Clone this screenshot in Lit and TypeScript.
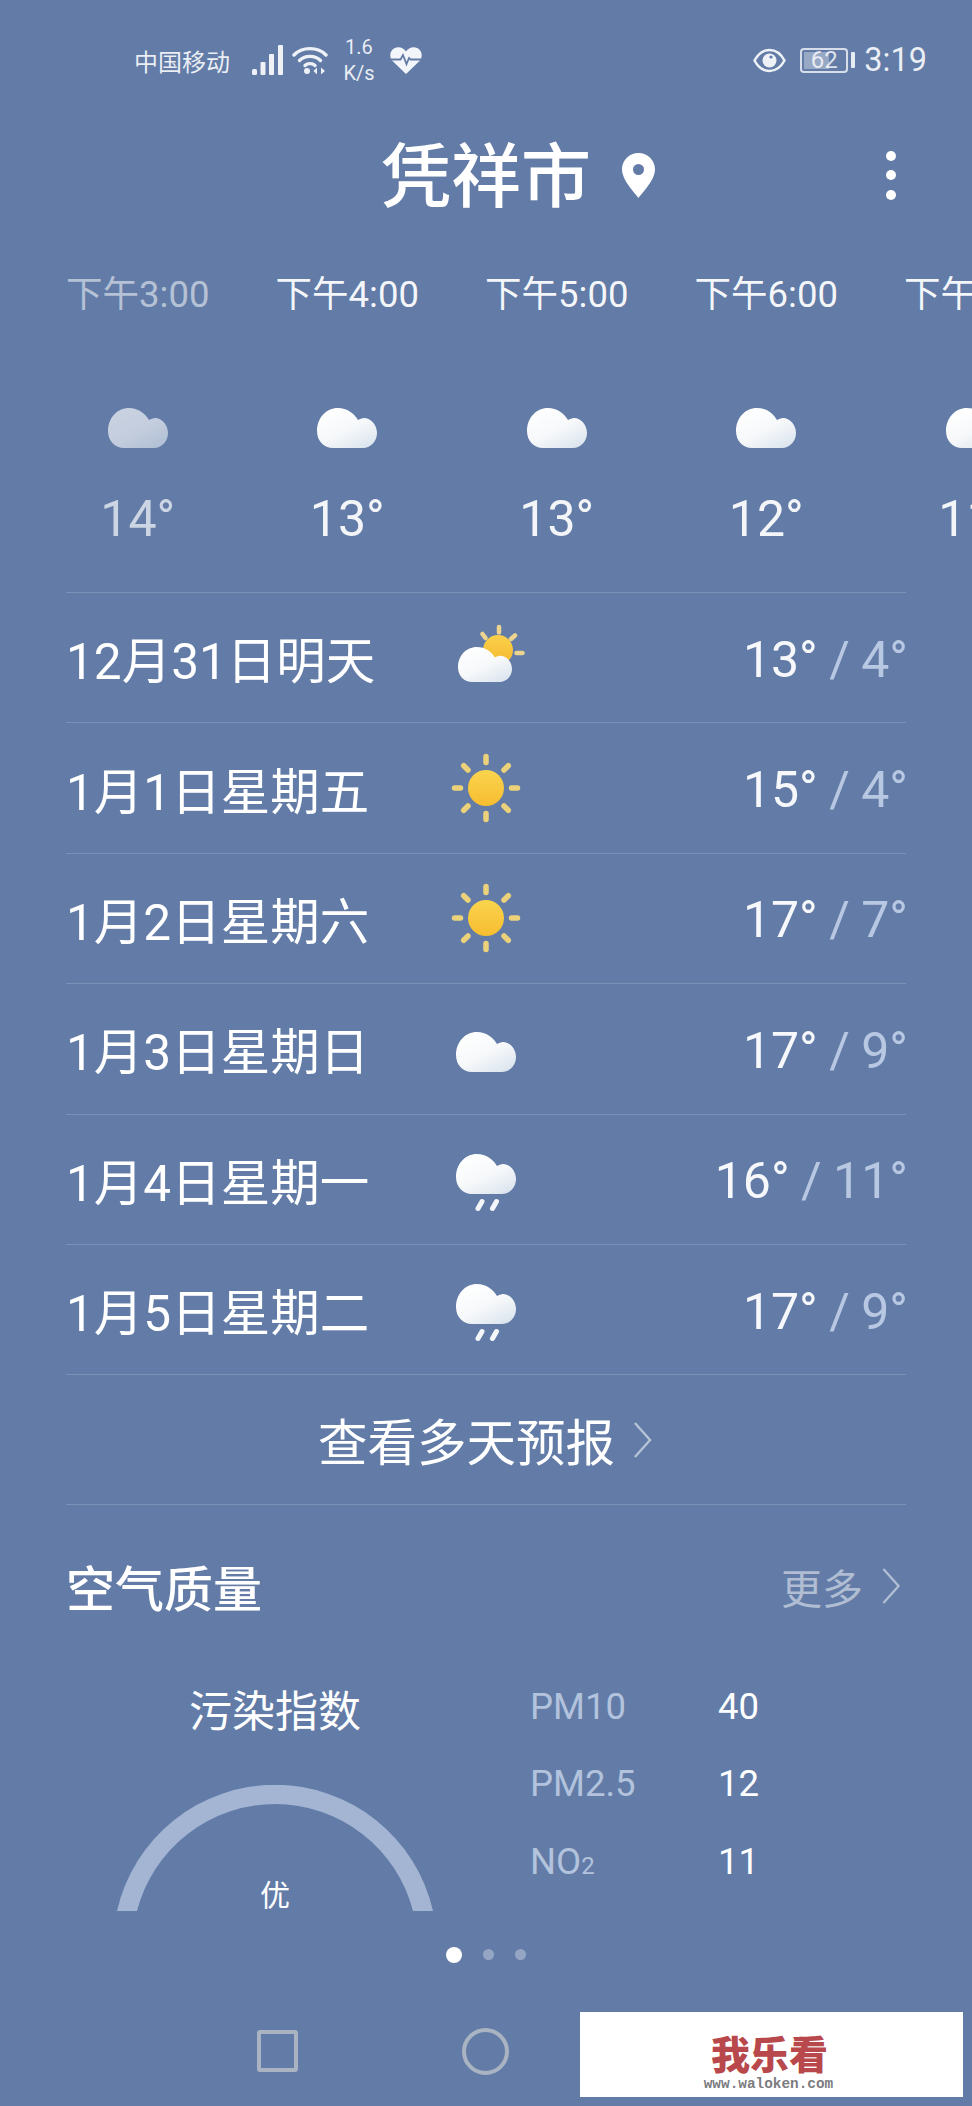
import { LitElement, html, css, svg } from "lit";
import { customElement } from "lit/decorators.js";

const CLOUD = "M16 40C7 40 0 33 0 23C0 10 9 0 21 0C30 0 37 5 41 12C43 11 45 10 47 10C54 10 60 17 60 25C60 33 54 40 46 40Z";

const grad = (id: string) => svg`<defs><linearGradient id=${id} x1="0.1" y1="0.1" x2="0.75" y2="1">
  <stop offset="0" stop-color="#ffffff"/><stop offset="0.55" stop-color="#f6f8fa"/><stop offset="1" stop-color="#dde6ef"/></linearGradient></defs>`;

const cloudIcon = (cls = "") => html`<svg class="cloud ${cls}" width="60" height="40" viewBox="0 0 60 40">
  ${grad("c" + cls)}<path d=${CLOUD} fill="url(#c${cls})"/></svg>`;

const rainIcon = () => html`<svg class="icon" width="60" height="58" viewBox="0 0 60 58">
  ${grad("r")}<path d=${CLOUD} fill="url(#r)"/>
  <path d="M26 47.500L22 54.500M40.500 47.500L36.500 54.500" stroke="#f4f7fa" stroke-width="5" stroke-linecap="round"/></svg>`;

const sunIcon = () => html`<svg class="icon" width="70" height="70" viewBox="0 0 70 70">
  <defs><linearGradient id="s" x1="0" y1="0" x2="0" y2="1"><stop offset="0" stop-color="#fad44e"/><stop offset="1" stop-color="#f7bd30"/></linearGradient></defs>
  <circle cx="35" cy="35" r="18" fill="url(#s)"/>
  <g stroke="#ecd17b" stroke-width="5.500" stroke-linecap="round">
    <path d="M35 3.500V9.500M35 60.500V66.500M3.500 35H9.500M60.500 35H66.500M12.700 12.700L17 17M53 53L57.300 57.300M12.700 57.300L17 53M53 17L57.300 12.700"/>
  </g></svg>`;

const partIcon = () => html`<svg class="icon" width="70" height="60" viewBox="0 0 70 60">
  <defs><linearGradient id="p" x1="0" y1="0" x2="0" y2="1"><stop offset="0" stop-color="#fad04c"/><stop offset="1" stop-color="#f5b92c"/></linearGradient>
  <linearGradient id="pc" x1="0.1" y1="0.1" x2="0.75" y2="1"><stop offset="0" stop-color="#ffffff"/><stop offset="0.55" stop-color="#f6f8fa"/><stop offset="1" stop-color="#dde6ef"/></linearGradient></defs>
  <circle cx="40" cy="27" r="15" fill="url(#p)"/>
  <g stroke="#ecd38e" stroke-width="4.500" stroke-linecap="round">
    <path d="M41 4V9.500M24.500 11L27.500 15M57 12.500L53 16M58.500 30H64.500"/>
  </g>
  <path transform="translate(0 24) scale(.9 .875)" d=${CLOUD} fill="url(#pc)"/></svg>`;

const chevron = (w: number, h: number) => html`<svg class="chev" width=${w} height=${h} viewBox="0 0 20 40">
  <path d="M2 2L18 20L2 38" fill="none" stroke="currentColor" stroke-width="2.400"/></svg>`;

@customElement("app-root")
export class AppRoot extends LitElement {
  static styles = css`
    :host {
      display: block;
      width: 972px;
      height: 2106px;
      overflow: hidden;
      position: relative;
      background: #627ca7;
      color: #fff;
      font-family: Roboto, "Noto Sans CJK SC", sans-serif;
    }
    .status {
      height: 120px;
      display: flex;
      align-items: center;
      justify-content: space-between;
      padding: 0 45px 0 134px;
      color: rgba(255, 255, 255, 0.88);
    }
    .st-left, .st-right { display: flex; align-items: center; }
    .carrier { font-size: 24px; width: 118px; }
    .signal { margin-right: 9px; }
    .wifi { margin-right: 15px; }
    .net { width: 32px; margin-right: 15px; font-size: 20px; line-height: 26px; text-align: center; }
    .eye { margin-right: 14px; }
    .batt {
      width: 48px;
      height: 25px;
      box-sizing: border-box;
      border: 2px solid rgba(255, 255, 255, 0.75);
      border-radius: 4px;
      padding: 2px;
      background: linear-gradient(90deg, rgba(255, 255, 255, 0.35) 62%, transparent 62%) content-box;
      font-size: 24px;
      line-height: 17px;
      text-align: center;
      color: rgba(255, 255, 255, 0.8);
    }
    .knob { width: 4px; height: 16px; margin: 0 9px 0 3px; background: rgba(255, 255, 255, 0.85); border-radius: 1px; }
    .time { font-size: 32.500px; }
    .title {
      height: 110px;
      display: grid;
      grid-template-columns: 1fr auto 1fr;
      align-items: center;
    }
    .title h1 { margin: 6px 0 0; font-size: 70px; font-weight: 500; line-height: 104px; grid-column: 2; }
    .title-end { display: flex; align-items: center; justify-content: space-between; padding: 0 76px 0 31px; }
    .pin { display: block; }
    .kebab { display: flex; flex-direction: column; gap: 9.500px; }
    .kebab i { display: block; width: 10px; height: 10px; border-radius: 50%; background: #fff; }
    .hourly { display: flex; padding: 40px 0 0 33px; width: 1100px; }
    .hour { flex: 0 0 209.500px; display: flex; flex-direction: column; align-items: center; }
    .hour .h { font-size: 36.500px; line-height: 50px; white-space: nowrap; color: rgba(255, 255, 255, 0.95); }
    .hour .cloud { display: block; margin-top: 88px; }
    .hour .t { font-size: 50px; line-height: 60px; margin-top: 41px; color: rgba(255, 255, 255, 0.92); }
    .hour.past .h { color: rgba(255, 255, 255, 0.55); }
    .hour.past .t { color: rgba(255, 255, 255, 0.68); }
    .dim { opacity: 0.66; }
    .list { margin: 43px 66px 0; }
    .row {
      height: 130.400px;
      box-sizing: border-box;
      border-top: 1px solid rgba(255, 255, 255, 0.16);
      display: grid;
      grid-template-columns: 385px 70px 1fr;
      align-items: center;
    }
    .row .d { font-size: 49.500px; white-space: nowrap; }
    .row .ic { display: flex; justify-content: center; align-items: center; padding-top: 7px; }
    .row .ic svg { flex-shrink: 0; }
    .row .ic.part { padding: 0 0 10px 0; }
    .row .ic.part svg { margin-left: 14px; }
    .row .ic.sun { padding-top: 0; }
    .icon { display: block; }
    .row .r { text-align: right; font-size: 50px; white-space: nowrap; padding-top: 4px; margin-right: -2px; word-spacing: -1px; color: rgba(255, 255, 255, 0.95); }
    .row .r span { color: rgba(200, 214, 236, 0.85); }
    .more {
      height: 130.400px;
      box-sizing: border-box;
      border-top: 1px solid rgba(255, 255, 255, 0.16);
      border-bottom: 1px solid rgba(255, 255, 255, 0.16);
      display: flex;
      align-items: center;
      justify-content: center;
      gap: 18px;
      font-size: 49.500px;
      padding-right: 2px;
    }
    .more .chev { color: rgba(255, 255, 255, 0.55); }
    .air-head {
      margin: 0 66px;
      height: 162px;
      display: flex;
      align-items: center;
      justify-content: space-between;
      padding-right: 5px;
    }
    .air-head h2 { margin: 0; font-size: 49px; font-weight: 500; }
    .air-more { display: flex; align-items: center; gap: 18px; font-size: 41px; color: rgba(255, 255, 255, 0.5); }
    .air { margin: 15px 66px 0; display: flex; gap: 46px; }
    .aqi { width: 418px; display: flex; flex-direction: column; align-items: center; position: relative; }
    .aqi .lbl { font-size: 43px; line-height: 60px; }
    .gauge { display: block; margin-top: 43px; }
    .aqi .lvl { position: absolute; bottom: 0; left: 0; right: 0; text-align: center; font-size: 30px; line-height: 30px; }
    .tbl { display: grid; grid-template-columns: 188px auto; grid-auto-rows: 50px; row-gap: 27.500px; justify-content: start; font-size: 36.500px; line-height: 50px; }
    .tbl .k { color: rgba(213, 224, 243, 0.72); }
    .tbl small { font-size: 24px; }
    .dots { display: flex; justify-content: center; align-items: center; gap: 21px; margin-top: 36px; height: 16px; }
    .dots i { display: block; width: 11px; height: 11px; border-radius: 50%; background: rgba(255, 255, 255, 0.32); }
    .dots i.on { width: 16px; height: 16px; background: #fff; }
    .nav { display: flex; align-items: center; margin-top: 65px; padding-left: 257px; gap: 164px; }
    .nav .sq { width: 41px; height: 42px; box-sizing: border-box; border: 4px solid #aab3c1; border-radius: 3px; }
    .nav .ci { width: 47px; height: 47px; box-sizing: border-box; border: 4px solid #aab3c1; border-radius: 50%; }
    .mark {
      position: absolute;
      left: 580px;
      top: 2012px;
      width: 383px;
      height: 85px;
      background: #fff;
      display: flex;
      flex-direction: column;
      align-items: center;
    }
    .mark b { font-size: 39px; line-height: 39px; margin-top: 25px; font-weight: 900; color: #b8484b; margin-left: -4px; }
    .mark span { font-family: "Liberation Mono", monospace; font-size: 14.400px; line-height: 16px; font-weight: 700; color: #7b7b80; margin-left: -6px; }
  `;

  render() {
    const hours = [
      ["下午3:00", "14°"],
      ["下午4:00", "13°"],
      ["下午5:00", "13°"],
      ["下午6:00", "12°"],
      ["下午7:00", "11°"],
    ];
    const days: [string, string, unknown, string, string][] = [
      ["12月31日明天", "part", partIcon(), "13°", "4°"],
      ["1月1日星期五", "sun", sunIcon(), "15°", "4°"],
      ["1月2日星期六", "sun", sunIcon(), "17°", "7°"],
      ["1月3日星期日", "", cloudIcon("d"), "17°", "9°"],
      ["1月4日星期一", "", rainIcon(), "16°", "11°"],
      ["1月5日星期二", "", rainIcon(), "17°", "9°"],
    ];
    return html`
      <div class="status">
        <div class="st-left">
          <span class="carrier">中国移动</span>
          <svg class="signal" width="31" height="30" viewBox="0 0 31 30" fill="#eef2f7">
            <rect x="0" y="24" width="5" height="6" rx="1.500"/><rect x="8.500" y="17" width="5" height="13" rx="1"/>
            <rect x="17" y="9" width="5" height="21" rx="1"/><rect x="26" y="0" width="5" height="30" rx="1"/>
          </svg>
          <svg class="wifi" width="36" height="28" viewBox="0 0 36 28" fill="none" stroke="#eef2f7" stroke-width="3.400" stroke-linecap="round">
            <path d="M2 9C10 0.500 26 0.500 34 9"/><path d="M7.500 14.500C12.500 9 23.500 9 28.500 14.500"/><path d="M13 19.500C15.500 17 20.500 17 23 19.500"/>
            <circle cx="15" cy="25" r="3" fill="#eef2f7" stroke="none"/>
            <path d="M25 21.500L21.500 25L25 28.500ZM29 21.500L33 25L29 28.500Z" fill="#eef2f7" stroke="none"/>
          </svg>
          <div class="net">1.6<br />K/s</div>
          <svg width="32" height="27" viewBox="0 0 32 27">
            <path d="M16 27L2.500 14C-1.500 9.500 0 2 6.500 0.500C10.500 -0.300 14 1.500 16 4.500C18 1.500 21.500 -0.300 25.500 0.500C32 2 33.500 9.500 29.500 14Z" fill="#f2f5f9"/>
            <path d="M1 12.500H10.500L13 8L16.500 17L19 11L20.500 12.500H31" fill="none" stroke="#627ca7" stroke-width="1.800"/>
          </svg>
        </div>
        <div class="st-right">
          <svg class="eye" width="33" height="25" viewBox="0 0 33 25">
            <path d="M1.500 12.500C9 -1.500 24 -1.500 31.500 12.500C24 26.500 9 26.500 1.500 12.500Z" fill="none" stroke="#eef2f7" stroke-width="2.500"/>
            <circle cx="16.500" cy="12.500" r="7" fill="#eef2f7"/><circle cx="18" cy="9" r="1.600" fill="#627ca7"/>
          </svg>
          <div class="batt">62</div>
          <div class="knob"></div>
          <span class="time">3:19</span>
        </div>
      </div>

      <div class="title">
        <h1>凭祥市</h1>
        <div class="title-end">
          <svg class="pin" width="33" height="45" viewBox="0 0 33 45">
            <path fill-rule="evenodd" d="M16.500 0C7.400 0 0 7.200 0 16.300C0 27 12 39 16.500 45C21 39 33 27 33 16.300C33 7.200 25.600 0 16.500 0ZM16.500 11A5.500 5.500 0 1 1 16.500 22A5.500 5.500 0 1 1 16.500 11Z" fill="#fff"/>
          </svg>
          <div class="kebab"><i></i><i></i><i></i></div>
        </div>
      </div>

      <div class="hourly">
        ${hours.map(
          ([h, t], i) => html`<div class="hour ${i === 0 ? "past" : ""}">
            <div class="h">${h}</div>
            ${cloudIcon(i === 0 ? "dim" : "h")}
            <div class="t">${t}</div>
          </div>`
        )}
      </div>

      <div class="list">
        ${days.map(
          ([d, cls, ic, hi, lo]) => html`<div class="row">
            <div class="d">${d}</div>
            <div class="ic ${cls}">${ic}</div>
            <div class="r">${hi} <span>/ ${lo}</span></div>
          </div>`
        )}
        <div class="more">查看多天预报 ${chevron(19, 38)}</div>
      </div>

      <div class="air-head">
        <h2>空气质量</h2>
        <div class="air-more">更多 ${chevron(20, 38)}</div>
      </div>

      <div class="air">
        <div class="aqi">
          <div class="lbl">污染指数</div>
          <svg class="gauge" width="316" height="126" viewBox="0 0 316 126">
            <path d="M0 126A162 162 0 0 1 316 126H296A142.500 142.500 0 0 0 20 126Z" fill="#a3b5d3"/>
          </svg>
          <div class="lvl">优</div>
        </div>
        <div class="tbl">
          <div class="k">PM10</div><div>40</div>
          <div class="k">PM2.5</div><div>12</div>
          <div class="k">NO<small>2</small></div><div>11</div>
        </div>
      </div>

      <div class="dots"><i class="on"></i><i></i><i></i></div>

      <div class="nav"><div class="sq"></div><div class="ci"></div></div>

      <div class="mark"><b>我乐看</b><span>www.waloken.com</span></div>
    `;
  }
}
